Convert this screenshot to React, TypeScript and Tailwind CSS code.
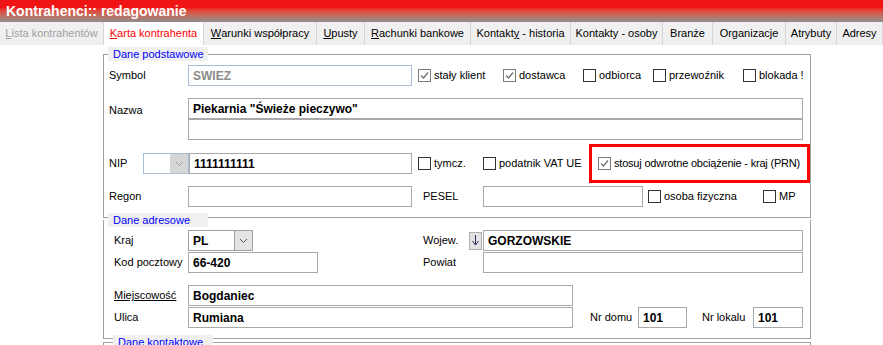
import type { ReactNode } from "react";

function Check({ checked, dim }: { checked?: boolean; dim?: boolean }) {
  return (
    <span
      className={`flex h-[13px] w-[13px] shrink-0 items-center justify-center border bg-white ${
        dim ? "border-[#7a7a7a]" : "border-[#333333]"
      }`}
    >
      {checked && (
        <svg width="9" height="9" viewBox="0 0 9 9">
          <path d="M1 4.5 L3.5 7 L8 1.5" fill="none" stroke="#707070" strokeWidth="1.3" />
        </svg>
      )}
    </span>
  );
}

function CheckItem({ label, checked, dim, w }: { label: string; checked?: boolean; dim?: boolean; w: string }) {
  return (
    <div className={`flex shrink-0 items-center gap-[3px] ${w}`}>
      <Check checked={checked} dim={dim} />
      <span className="whitespace-nowrap">{label}</span>
    </div>
  );
}

function Field({ value, w, muted, blue }: { value?: string; w: string; muted?: boolean; blue?: boolean }) {
  return (
    <div
      className={`flex h-[21px] shrink-0 items-center border bg-white pl-[4px] text-[12px] font-bold ${w} ${
        blue ? "border-[#a9bdd6]" : "border-[#a9a9a9]"
      } ${muted ? "text-[#8a8a8a]" : "text-black"}`}
    >
      {value}
    </div>
  );
}

function Chevron({ color }: { color: string }) {
  return (
    <svg width="9" height="6" viewBox="0 0 9 6">
      <path d="M1 1 L4.5 4.5 L8 1" fill="none" stroke={color} strokeWidth="1" />
    </svg>
  );
}

function Group({ title, children, className, legendCls }: { title: string; children?: ReactNode; className: string; legendCls: string }) {
  return (
    <fieldset className={`w-[708px] border-[#a0a0a0] ${className}`}>
      <legend className={`h-[14px] w-[100px] bg-[#f0f0f0] pl-[5px] leading-[14px] text-[#0000ff] ${legendCls}`}>
        {title}
      </legend>
      {children}
    </fieldset>
  );
}

const tabs: { label: ReactNode; w: string; cls?: string }[] = [
  { label: <><span className="underline">L</span>ista kontrahentów</>, w: "w-[104px]", cls: "text-[#a0a0a0]" },
  { label: <><span className="underline">K</span>arta kontrahenta</>, w: "w-[100px]", cls: "bg-white text-[#ff0000]" },
  { label: <><span className="underline">W</span>arunki współpracy</>, w: "w-[113px]" },
  { label: <><span className="underline">U</span>pusty</>, w: "w-[48px]" },
  { label: <><span className="underline">R</span>achunki bankowe</>, w: "w-[106px]" },
  { label: <>Kontakt<span className="underline">y</span>{" - historia"}</>, w: "w-[100px]" },
  { label: "Kontakty - osoby", w: "w-[92px]" },
  { label: "Branże", w: "w-[50px]" },
  { label: "Organizacje", w: "w-[73px]" },
  { label: "Atrybuty", w: "w-[51px]" },
  { label: "Adresy", w: "w-[46px]" },
];

export default function App() {
  return (
    <div className="h-[345px] w-[883px] overflow-hidden bg-white font-[family-name:'Liberation_Sans',Arial,sans-serif] text-[11px] text-black">
      <div className="h-[22px] bg-linear-to-b from-[#f01414] from-35% to-[#8c8c8c] pl-[6px] text-[14px] leading-[22px] font-bold text-white">
        Kontrahenci:: redagowanie
      </div>

      <div className="flex h-[23px] bg-[#f0f0f0]">
        {tabs.map((t, i) => (
          <div
            key={i}
            className={`flex shrink-0 items-center justify-center whitespace-pre border-r border-[#d6d6d6] ${t.w} ${t.cls ?? ""}`}
          >
            {t.label}
          </div>
        ))}
      </div>

      <div className="pl-[103px] pt-[2px]">
        <Group title="Dane podstawowe" className="border pb-[10px]" legendCls="ml-[4px]">
          <div className="mt-[4px] flex h-[21px] items-center pl-[5px]">
            <span className="w-[79px] shrink-0">Symbol</span>
            <Field value="SWIEZ" w="w-[224px]" muted blue />
            <div className="ml-[6px] flex items-center">
              <CheckItem label="stały klient" checked dim w="w-[85px]" />
              <CheckItem label="dostawca" checked dim w="w-[80px]" />
              <CheckItem label="odbiorca" w="w-[70px]" />
              <CheckItem label="przewoźnik" w="w-[90px]" />
              <CheckItem label="blokada !" w="w-[60px]" />
            </div>
          </div>

          <div className="mt-[12px] flex pl-[5px]">
            <span className="w-[79px] shrink-0 pt-[4px]">Nazwa</span>
            <div className="flex flex-col">
              <Field value={'Piekarnia "Świeże pieczywo"'} w="w-[615px]" />
              <Field w="w-[615px]" />
            </div>
          </div>

          <div className="mt-[13px] flex h-[21px] items-center pl-[5px]">
            <span className="w-[34px] shrink-0">NIP</span>
            <div className="flex h-[21px] w-[46px] shrink-0 border border-[#a9bdd6] bg-white">
              <div className="flex-1" />
              <div className="flex w-[18px] items-center justify-center bg-[#d6d6d6]">
                <Chevron color="#a0a0a0" />
              </div>
            </div>
            <Field value="1111111111" w="w-[223px]" />
            <div className="ml-[6px] flex items-center">
              <CheckItem label="tymcz." w="w-[65px]" />
              <CheckItem label="podatnik VAT UE" w="w-[106px]" />
              <div className="-my-[9px] flex h-[39px] w-[221px] shrink-0 items-center gap-[3px] border-[3px] border-[#ff0000] pl-[6px]">
                <Check checked dim />
                <span className="whitespace-nowrap tracking-[-0.2px]">stosuj odwrotne obciążenie - kraj (PRN)</span>
              </div>
            </div>
          </div>

          <div className="mt-[12px] flex h-[21px] items-center pl-[5px]">
            <span className="w-[79px] shrink-0">Regon</span>
            <Field w="w-[224px]" />
            <span className="ml-[11px] w-[60px] shrink-0">PESEL</span>
            <Field w="w-[160px]" />
            <div className="ml-[5px] flex items-center">
              <CheckItem label="osoba fizyczna" w="w-[115px]" />
              <CheckItem label="MP" w="w-[30px]" />
            </div>
          </div>
        </Group>

        <Group title="Dane adresowe" className="-mt-[5px] border border-t-0 pb-[10px]" legendCls="ml-[4px]">
          <div className="mt-[3px] flex h-[21px] items-center pl-[10px]">
            <div className="flex w-[309px] shrink-0 items-center">
              <span className="w-[74px] shrink-0">Kraj</span>
              <div className="flex h-[21px] w-[65px] items-center border border-[#a0a0a0] bg-white pl-[4px] text-[12px] font-bold">
                <span className="flex-1">PL</span>
                <div className="flex h-[19px] w-[18px] items-center justify-center border-l border-[#a0a0a0] bg-[#e3e3e3]">
                  <Chevron color="#555555" />
                </div>
              </div>
            </div>
            <span className="w-[46px] shrink-0">Wojew.</span>
            <div className="mr-[1px] flex h-[18px] w-[13px] shrink-0 items-center justify-center border border-[#b0b0b0] bg-[#e3e3e3]">
              <svg width="7" height="11" viewBox="0 0 7 11">
                <path d="M3.5 0 V9 M0.5 6 L3.5 10 L6.5 6" fill="none" stroke="#2a2a5a" strokeWidth="1" />
              </svg>
            </div>
            <Field value="GORZOWSKIE" w="w-[320px]" />
          </div>

          <div className="mt-[1px] flex h-[21px] items-center pl-[10px]">
            <div className="flex w-[309px] shrink-0 items-center">
              <span className="w-[74px] shrink-0">Kod pocztowy</span>
              <Field value="66-420" w="w-[130px]" />
            </div>
            <span className="w-[60px] shrink-0">Powiat</span>
            <Field w="w-[320px]" />
          </div>

          <div className="mt-[12px] flex h-[21px] items-center pl-[10px]">
            <span className="w-[74px] shrink-0 underline">Miejscowość </span>
            <Field value="Bogdaniec" w="w-[385px]" />
          </div>

          <div className="mt-[1px] flex h-[21px] items-center pl-[10px]">
            <span className="w-[74px] shrink-0">Ulica</span>
            <Field value="Rumiana" w="w-[385px]" />
            <span className="ml-[17px] w-[48px] shrink-0">Nr domu</span>
            <Field value="101" w="w-[49px]" />
            <span className="ml-[15px] w-[51px] shrink-0">Nr lokalu</span>
            <Field value="101" w="w-[50px]" />
          </div>
        </Group>

        <Group title="Dane kontaktowe" className="-mt-[4px] h-[60px] border" legendCls="ml-[9px]" />
      </div>
    </div>
  );
}
